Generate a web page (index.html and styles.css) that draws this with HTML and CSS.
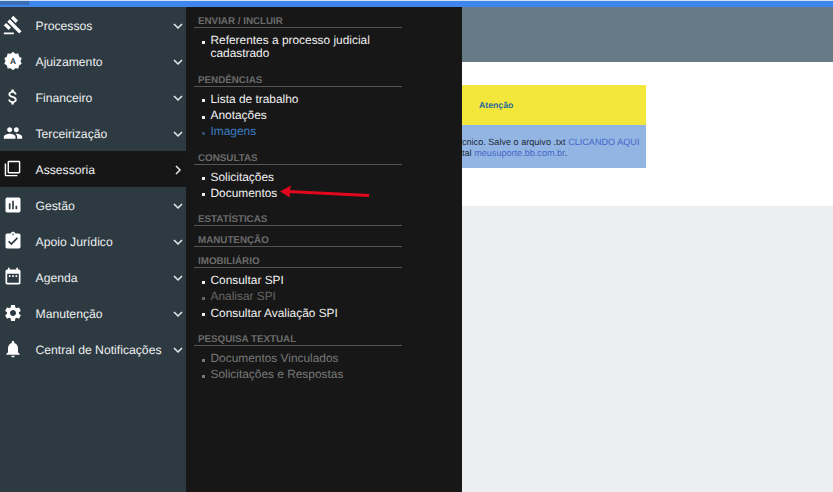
FILE: index.html
```html
<!DOCTYPE html>
<html lang="pt">
<head>
<meta charset="utf-8">
<title>Portal</title>
<link rel="stylesheet" href="styles.css">
</head>
<body>
<div class="topbar"><span class="topbar-tab"></span></div>
<div class="shell">
  <nav class="sidebar">
    <a class="nav-row"><svg class="nav-icon" viewBox="0 0 24 24"><path d="M1 21h12v2H1zM5.245 8.07l2.83-2.827 14.14 14.142-2.828 2.828zM12.317 1l5.657 5.656-2.83 2.83-5.654-5.66zM3.825 9.485l5.657 5.657-2.828 2.828-5.657-5.657z"/></svg><span class="nav-label">Processos</span><svg class="chev" viewBox="0 0 10 10"><path d="M1 3l4 4 4-4"/></svg></a>
    <a class="nav-row"><svg class="nav-icon" viewBox="0 0 24 24"><polygon points="12,1 14.78,3.44 18.47,3.1 19.28,6.71 22.46,8.6 21,12 22.46,15.4 19.28,17.29 18.47,20.9 14.78,20.56 12,23 9.22,20.56 5.53,20.9 4.72,17.29 1.54,15.4 3,12 1.54,8.6 4.72,6.71 5.53,3.1 9.22,3.44"/><text class="badge-letter" x="12" y="15.8">A</text></svg><span class="nav-label">Ajuizamento</span><svg class="chev" viewBox="0 0 10 10"><path d="M1 3l4 4 4-4"/></svg></a>
    <a class="nav-row"><svg class="nav-icon" viewBox="0 0 24 24"><path d="M11.8 10.9c-2.27-.59-3-1.2-3-2.15 0-1.09 1.01-1.85 2.7-1.85 1.78 0 2.44.85 2.5 2.1h2.21c-.07-1.72-1.12-3.3-3.21-3.81V3h-3v2.16c-1.94.42-3.5 1.68-3.5 3.61 0 2.31 1.91 3.46 4.7 4.13 2.5.6 3 1.48 3 2.41 0 .69-.49 1.79-2.7 1.79-2.06 0-2.87-.92-2.98-2.1h-2.2c.12 2.19 1.76 3.42 3.68 3.83V21h3v-2.15c1.95-.37 3.5-1.5 3.5-3.55 0-2.84-2.43-3.81-4.7-4.4z"/></svg><span class="nav-label">Financeiro</span><svg class="chev" viewBox="0 0 10 10"><path d="M1 3l4 4 4-4"/></svg></a>
    <a class="nav-row"><svg class="nav-icon" viewBox="0 0 24 24"><path d="M16 11c1.66 0 2.99-1.34 2.99-3S17.66 5 16 5c-1.66 0-3 1.34-3 3s1.34 3 3 3zm-8 0c1.66 0 2.99-1.34 2.99-3S9.66 5 8 5C6.34 5 5 6.34 5 8s1.34 3 3 3zm0 2c-2.33 0-7 1.17-7 3.5V19h14v-2.5c0-2.33-4.67-3.5-7-3.5zm8 0c-.29 0-.62.02-.97.05 1.16.84 1.97 1.97 1.97 3.45V19h6v-2.5c0-2.33-4.67-3.5-7-3.5z"/></svg><span class="nav-label">Terceirização</span><svg class="chev" viewBox="0 0 10 10"><path d="M1 3l4 4 4-4"/></svg></a>
    <a class="nav-row nav-row-active"><span class="nav-icon-slot"><svg class="nav-icon-small" viewBox="0 0 24 24"><path d="M3 5H1v16c0 1.1.9 2 2 2h16v-2H3V5zm18-4H7c-1.1 0-2 .9-2 2v14c0 1.1.9 2 2 2h14c1.1 0 2-.9 2-2V3c0-1.1-.9-2-2-2zm0 16H7V3h14v14z"/></svg></span><span class="nav-label">Assessoria</span><svg class="chev" viewBox="0 0 10 10"><path d="M3 1l4 4-4 4"/></svg></a>
    <a class="nav-row"><svg class="nav-icon" viewBox="0 0 24 24"><path d="M19 3H5c-1.1 0-2 .9-2 2v14c0 1.1.9 2 2 2h14c1.1 0 2-.9 2-2V5c0-1.1-.9-2-2-2zM9 17H7v-7h2v7zm4 0h-2V7h2v10zm4 0h-2v-4h2v4z"/></svg><span class="nav-label">Gestão</span><svg class="chev" viewBox="0 0 10 10"><path d="M1 3l4 4 4-4"/></svg></a>
    <a class="nav-row"><svg class="nav-icon" viewBox="0 0 24 24"><path d="M19 3h-4.18C14.4 1.84 13.3 1 12 1c-1.3 0-2.4.84-2.82 2H5c-1.1 0-2 .9-2 2v14c0 1.1.9 2 2 2h14c1.1 0 2-.9 2-2V5c0-1.1-.9-2-2-2zm-7 0c.55 0 1 .45 1 1s-.45 1-1 1-1-.45-1-1 .45-1 1-1zm-2 14l-4-4 1.41-1.41L10 14.17l6.59-6.59L18 9l-8 8z"/></svg><span class="nav-label">Apoio Jurídico</span><svg class="chev" viewBox="0 0 10 10"><path d="M1 3l4 4 4-4"/></svg></a>
    <a class="nav-row"><svg class="nav-icon" viewBox="0 0 24 24"><path d="M19 3h-1V1h-2v2H8V1H6v2H5c-1.1 0-2 .9-2 2v14c0 1.1.9 2 2 2h14c1.1 0 2-.9 2-2V5c0-1.1-.9-2-2-2zm0 16H5V8h14v11zM7 10h2v2H7zm4 0h2v2h-2zm4 0h2v2h-2z"/></svg><span class="nav-label">Agenda</span><svg class="chev" viewBox="0 0 10 10"><path d="M1 3l4 4 4-4"/></svg></a>
    <a class="nav-row"><svg class="nav-icon" viewBox="0 0 24 24"><path d="M19.14 12.94c.04-.3.06-.61.06-.94 0-.32-.02-.64-.07-.94l2.03-1.58c.18-.14.23-.41.12-.61l-1.92-3.32c-.12-.22-.37-.29-.59-.22l-2.39.96c-.5-.38-1.03-.7-1.62-.94l-.36-2.54c-.04-.24-.24-.41-.48-.41h-3.84c-.24 0-.43.17-.47.41l-.36 2.54c-.59.24-1.13.57-1.62.94l-2.39-.96c-.22-.08-.47 0-.59.22L2.74 8.87c-.12.21-.08.47.12.61l2.03 1.58c-.05.3-.09.63-.09.94s.02.64.07.94l-2.03 1.58c-.18.14-.23.41-.12.61l1.92 3.32c.12.22.37.29.59.22l2.39-.96c.5.38 1.03.7 1.62.94l.36 2.54c.05.24.24.41.48.41h3.84c.24 0 .44-.17.47-.41l.36-2.54c.59-.24 1.13-.56 1.62-.94l2.39.96c.22.08.47 0 .59-.22l1.92-3.32c.12-.22.07-.47-.12-.61l-2.01-1.58zM12 15.6c-1.98 0-3.6-1.62-3.6-3.6s1.62-3.6 3.6-3.6 3.6 1.62 3.6 3.6-1.62 3.6-3.6 3.6z"/></svg><span class="nav-label">Manutenção</span><svg class="chev" viewBox="0 0 10 10"><path d="M1 3l4 4 4-4"/></svg></a>
    <a class="nav-row"><svg class="nav-icon" viewBox="0 0 24 24"><path d="M12 22c1.1 0 2-.9 2-2h-4c0 1.1.9 2 2 2zm6-6v-5c0-3.07-1.63-5.64-4.5-6.32V4c0-.83-.67-1.5-1.5-1.5s-1.5.67-1.5 1.5v.68C7.64 5.36 6 7.92 6 11v5l-2 2v1h16v-1l-2-2z"/></svg><span class="nav-label">Central de Notificações</span><svg class="chev" viewBox="0 0 10 10"><path d="M1 3l4 4 4-4"/></svg></a>
  </nav>

  <section class="flyout">
    <h3 class="fly-head">ENVIAR / INCLUIR</h3>
    <ul class="fly-list">
      <li>Referentes a processo judicial cadastrado</li>
    </ul>
    <h3 class="fly-head">PENDÊNCIAS</h3>
    <ul class="fly-list">
      <li>Lista de trabalho</li>
      <li>Anotações</li>
      <li class="is-link">Imagens</li>
    </ul>
    <h3 class="fly-head">CONSULTAS</h3>
    <ul class="fly-list">
      <li>Solicitações</li>
      <li>Documentos</li>
    </ul>
    <h3 class="fly-head">ESTATÍSTICAS</h3>
    <h3 class="fly-head">MANUTENÇÃO</h3>
    <h3 class="fly-head">IMOBILIÁRIO</h3>
    <ul class="fly-list">
      <li>Consultar SPI</li>
      <li class="is-dim">Analisar SPI</li>
      <li>Consultar Avaliação SPI</li>
    </ul>
    <h3 class="fly-head">PESQUISA TEXTUAL</h3>
    <ul class="fly-list">
      <li class="is-muted">Documentos Vinculados</li>
      <li class="is-muted">Solicitações e Respostas</li>
    </ul>
    <svg class="annot-arrow" viewBox="0 0 95 14"><path class="annot-line" d="M8 6.5L89 10.5"/><path class="annot-head" d="M0 6.5L11 .5 9.5 6.5l.5 6z"/></svg>
  </section>

  <main class="content">
    <div class="content-head"></div>
    <div class="content-body">
      <div class="alert">
        <div class="alert-title">Atenção</div>
        <div class="alert-text">
          <p>cnico. Salve o arquivo .txt <a class="alert-link">CLICANDO AQUI</a></p>
          <p>tal <a class="alert-link">meusuporte.bb.com.br</a>.</p>
        </div>
      </div>
    </div>
    <div class="content-rest"></div>
  </main>
</div>
</body>
</html>
```

FILE: styles.css
```css
* { box-sizing: border-box; }
html, body { margin: 0; height: 100%; }
body {
  display: flex;
  flex-direction: column;
  overflow: hidden;
  background: #eceef0;
  font-family: "Liberation Sans", Arial, sans-serif;
  text-rendering: geometricPrecision;
}
.topbar {
  height: 7px;
  flex: none;
  background: #3f85ee;
  border-top: 1px solid #cfe0f7;
  display: flex;
}
.topbar-tab { width: 29px; height: 4px; background: #3a6fb8; }
.shell { flex: 1; display: flex; min-height: 0; }

.sidebar { width: 186px; flex: none; background: #2d3a42; }
.nav-row { height: 36px; display: flex; align-items: center; color: #eef0f1; }
.nav-row-active { background: #161616; }
.nav-icon { width: 20px; height: 20px; margin: -1px 0 0 2.5px; fill: #fff; flex: none; }
.nav-icon-slot { width: 20px; margin: -1px 0 0 2.5px; display: flex; justify-content: center; flex: none; }
.nav-icon-small { width: 17px; height: 17px; fill: #fff; }
.badge-letter { font-family: "Liberation Sans", Arial, sans-serif; font-size: 10px; font-weight: 700; fill: #2d3a42; text-anchor: middle; }
.nav-label { margin-left: 13px; padding-top: 1px; font-size: 12.2px; white-space: nowrap; flex: 1; }
.chev { width: 10px; height: 10px; margin: 2px 3px 0 0; flex: none; fill: none; stroke: #e8ebec; stroke-width: 1.5; }

.flyout { width: 276px; flex: none; position: relative; background: #171717; padding: 0 60px 0 8px; }
.fly-head {
  margin: 0;
  height: 21px;
  padding: 9px 0 0 4px;
  border-bottom: 1px solid #555;
  font-size: 9.8px;
  line-height: 12px;
  font-weight: 700;
  color: #6b6b6b;
}
.fly-list { margin: 0; padding: 4.5px 0 3.5px; list-style: none; }
.fly-list li {
  position: relative;
  padding: 1.4px 0 1.4px 16.5px;
  font-size: 11.9px;
  line-height: 13.5px;
  color: #f2f2f2;
}
.fly-list li::before {
  content: "";
  position: absolute;
  left: 7.5px;
  top: 8px;
  width: 3px;
  height: 3px;
  background: currentColor;
}
.fly-list .is-link { color: #3d7fc4; }
.fly-list .is-link::before { background: #2c4a6a; }
.fly-list .is-muted { color: #777; }
.fly-list .is-dim { color: #666; }
.annot-arrow { position: absolute; left: 94px; top: 178px; width: 95px; height: 14px; }
.annot-line { fill: none; stroke: #e3071d; stroke-width: 2.8; }
.annot-head { fill: #e3071d; }

.content { flex: 1; min-width: 0; display: flex; flex-direction: column; }
.content-head { height: 55px; background: #657a85; flex: none; }
.content-body { height: 144px; padding-top: 23px; background: #fff; flex: none; }
.content-rest { flex: 1; background: #eceef0; }
.alert { width: 184px; }
.alert-title {
  height: 40px;
  padding-left: 17px;
  background: #f4e73c;
  color: #2a6a9a;
  font-size: 8.7px;
  font-weight: 700;
  line-height: 41px;
}
.alert-text {
  height: 43px;
  padding-top: 12px;
  background: #93b5e3;
  color: #1c2a3a;
  font-size: 9.1px;
  line-height: 10.5px;
  white-space: nowrap;
}
.alert-text p { margin: 0; }
.alert-link { color: #4467c9; }
```
